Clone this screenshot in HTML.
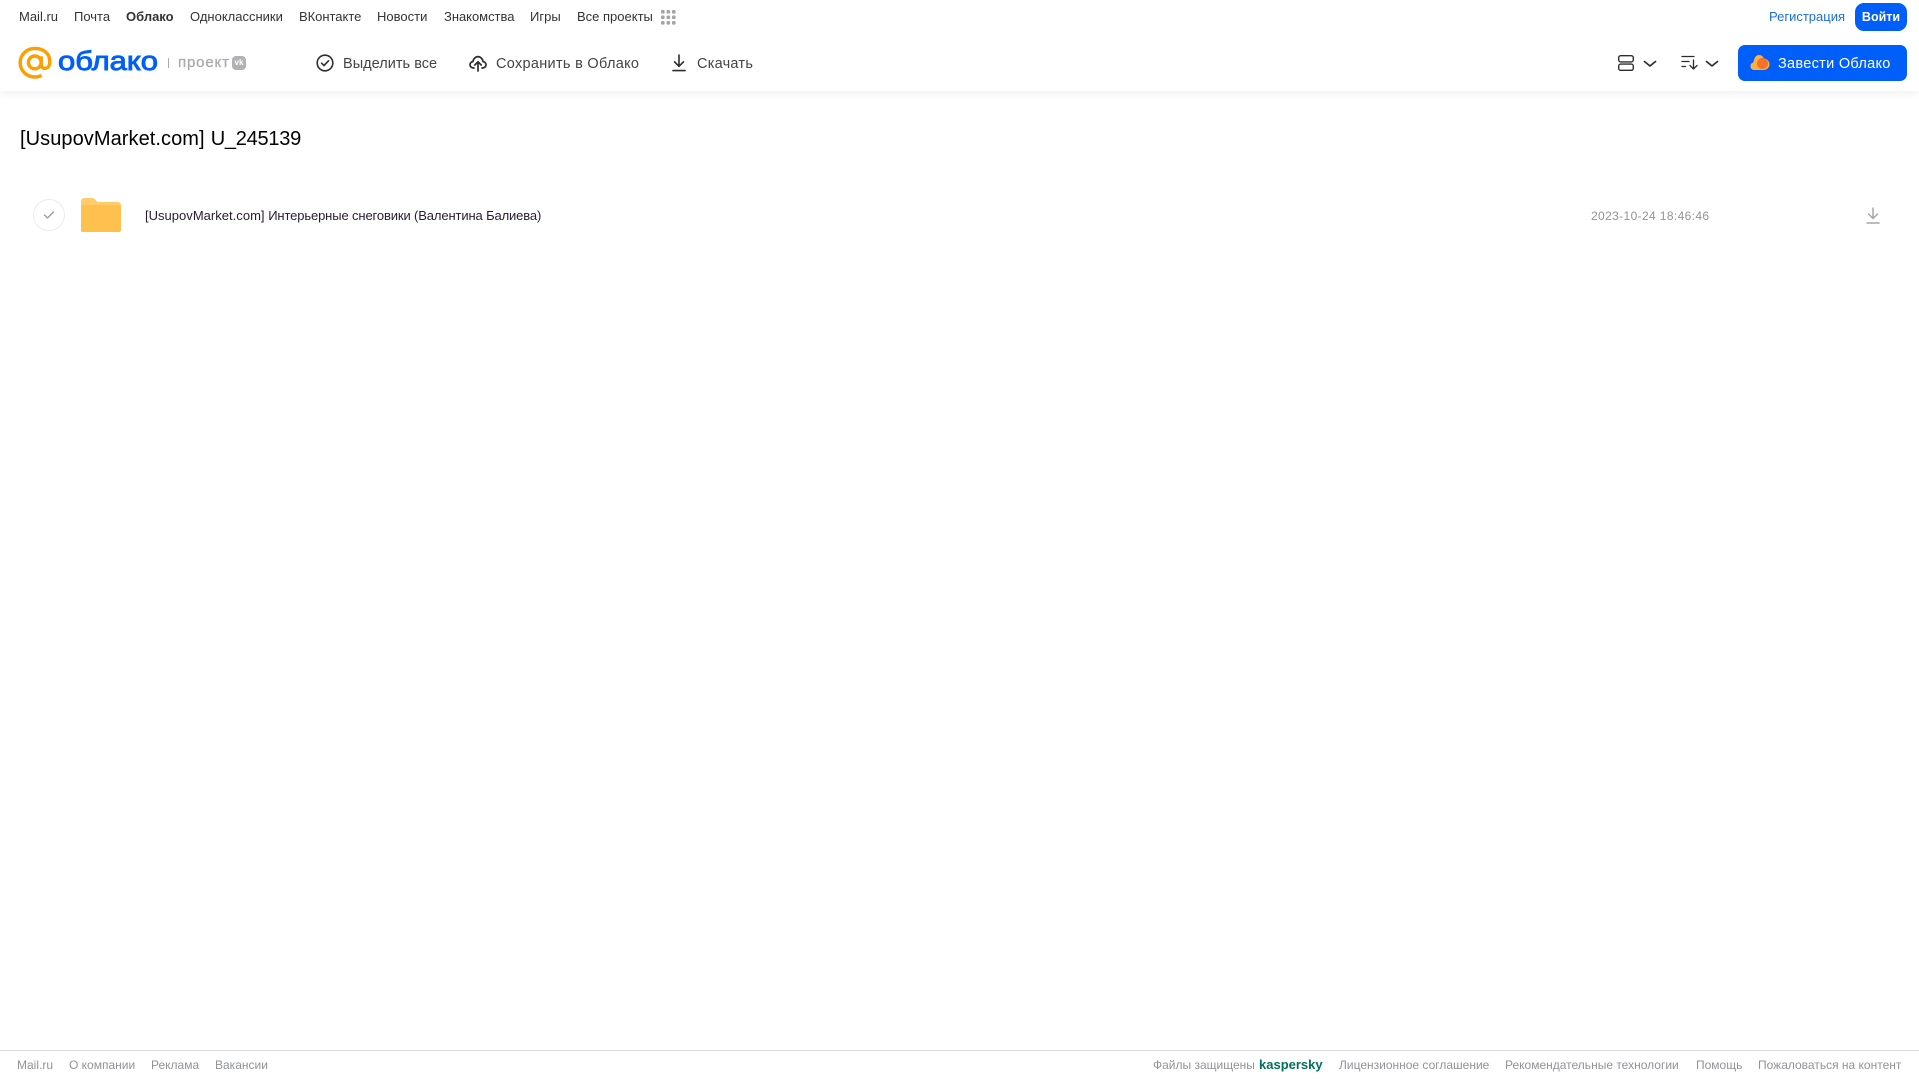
<!DOCTYPE html>
<html lang="ru"><head><meta charset="utf-8"><title>Облако</title>
<style>
html,body{margin:0;padding:0;background:#fff}
body{width:1919px;height:1079px;position:relative;overflow:hidden;font-family:"Liberation Sans",Arial,sans-serif}
.t{position:absolute;white-space:nowrap;line-height:20px}
.n{font-size:13px;color:#333;top:7px}
.h{font-size:14.5px;color:#444;top:54px;letter-spacing:.25px}
.f{font-size:12px;color:#919399;top:1055px}
svg{position:absolute;display:block}
</style></head><body>
<div style="position:absolute;left:0;top:0;width:1919px;height:91px;background:#fff;box-shadow:0 2px 8px rgba(0,0,0,.07)"></div>

<div class="t n" style="left:19px">Mail.ru</div>
<div class="t n" style="left:74px">Почта</div>
<div class="t n" style="left:126px;font-weight:bold">Облако</div>
<div class="t n" style="left:190px">Одноклассники</div>
<div class="t n" style="left:299px;letter-spacing:-.03px">ВКонтакте</div>
<div class="t n" style="left:377px">Новости</div>
<div class="t n" style="left:444px;letter-spacing:-.03px">Знакомства</div>
<div class="t n" style="left:530px">Игры</div>
<div class="t n" style="left:577px">Все проекты</div>
<svg style="left:661px;top:10px" width="15" height="15" fill="#a5a6a8"><rect x="0" y="0" width="3.6" height="3.6" rx="1"/><rect x="5.5" y="0" width="3.6" height="3.6" rx="1"/><rect x="11" y="0" width="3.6" height="3.6" rx="1"/><rect x="0" y="5.5" width="3.6" height="3.6" rx="1"/><rect x="5.5" y="5.5" width="3.6" height="3.6" rx="1"/><rect x="11" y="5.5" width="3.6" height="3.6" rx="1"/><rect x="0" y="11" width="3.6" height="3.6" rx="1"/><rect x="5.5" y="11" width="3.6" height="3.6" rx="1"/><rect x="11" y="11" width="3.6" height="3.6" rx="1"/></svg>

<div class="t" style="left:1769px;top:7px;font-size:13px;color:#1a6fe0">Регистрация</div>
<div class="t" style="left:1855px;top:3px;width:52px;height:28px;line-height:28px;background:#005ff9;border-radius:9px;color:#fff;font-size:12.5px;font-weight:bold;text-align:center">Войти</div>

<svg style="left:18px;top:46px" width="34" height="34" viewBox="0 0 35 34" fill="none" stroke="#ff9e00" stroke-width="3.5"><circle cx="17.3" cy="16.4" r="6.6"/><path d="M23.9 10v8.500c0 5.500 7.600 5.500 8.600-.5C34 8 27 2 17.300 2 9 2 2.200 8.600 2.200 16.600 2.200 25 9 31.400 17.300 31.400c3 0 5-.6 7-1.700"/></svg>
<svg style="left:56px;top:42px;overflow:visible" width="105" height="40"><text x="2" y="28" font-family="Liberation Sans" font-size="27" fill="#005ff9" stroke="#005ff9" stroke-width=".9" textLength="100" lengthAdjust="spacingAndGlyphs">облако</text></svg>
<div style="position:absolute;left:168px;top:58px;width:1px;height:10px;background:#a9abae"></div>
<svg style="left:177px;top:52px;overflow:visible" width="54" height="20"><text x="1" y="15" font-family="Liberation Sans" font-size="15" fill="#a8abaf" stroke="#a8abaf" stroke-width=".3" textLength="51" lengthAdjust="spacing">проект</text></svg>
<div class="t" style="left:232px;top:56px;width:14px;height:14px;line-height:14px;background:#b0b2b6;border-radius:4px;color:#fff;font-size:8px;font-weight:bold;text-align:center">vk</div>

<svg style="left:316px;top:54px" width="18" height="18" fill="none" stroke="#2c2d2e" stroke-width="1.6"><circle cx="9" cy="9" r="7.8"/><path d="M5.600 9.200l2.400 2.400 4.500-4.800" stroke-linecap="round" stroke-linejoin="round"/></svg>
<div class="t h" style="left:343px;letter-spacing:.03px">Выделить все</div>
<svg style="left:469px;top:54px" width="18" height="18" fill="none" stroke="#2c2d2e" stroke-width="1.7" stroke-linecap="round" stroke-linejoin="round"><path d="M5 14H4.400C2.400 14 1 12.500 1 10.800c0-1.700 1.200-3 2.900-3.200C4.300 5 6.400 2.600 9 2.600s4.700 2.400 5.100 5c1.700.2 2.900 1.500 2.900 3.200 0 1.700-1.400 3.200-3.400 3.200H13"/><path d="M9 17V8M5.800 11L9 7.800 12.200 11"/></svg>
<div class="t h" style="left:496px;letter-spacing:.3px">Сохранить в Облако</div>
<svg style="left:671px;top:54px" width="16" height="18" fill="none" stroke="#2c2d2e" stroke-width="1.6" stroke-linecap="round" stroke-linejoin="round"><path d="M8 1v11M3.500 7.800L8 12.300l4.500-4.500M2 16.600h12"/></svg>
<div class="t h" style="left:697px">Скачать</div>

<svg style="left:1618px;top:55px" width="16" height="16" fill="none" stroke="#2c2d2e" stroke-width="1.4"><rect x=".7" y=".7" width="14.600" height="6.200" rx="2"/><rect x=".7" y="9.100" width="14.600" height="6.200" rx="2"/></svg>
<svg style="left:1643px;top:60px" width="14" height="8" fill="none" stroke="#2c2d2e" stroke-width="1.7" stroke-linecap="round" stroke-linejoin="round"><path d="M1.500 1.500L7 6l5.500-4.500"/></svg>
<svg style="left:1681px;top:55px" width="17" height="15" fill="none" stroke="#2c2d2e" stroke-width="1.3" stroke-linecap="round" stroke-linejoin="round"><path d="M1 1.500h12M1 6.500h7M1 11.500h3.500M12.500 5v9M9 10.500l3.500 3.500 3.500-3.500"/></svg>
<svg style="left:1705px;top:60px" width="14" height="8" fill="none" stroke="#2c2d2e" stroke-width="1.7" stroke-linecap="round" stroke-linejoin="round"><path d="M1.500 1.500L7 6l5.500-4.500"/></svg>

<div style="position:absolute;left:1738px;top:45px;width:169px;height:36px;background:#005ff9;border-radius:7px"></div>
<svg style="left:1750px;top:54px" width="20" height="17"><path d="M4.500 16C2 16 .5 14.300.5 12.200c0-2 1.300-3.500 3-3.800C4 4 6 1 9 1c2.500 0 4 1.500 4.800 3.500 3 0 5.700 2.700 5.700 5.800 0 3.300-2.700 5.700-5.700 5.700z" fill="#ffb03a"/><circle cx="12.500" cy="9.500" r="5.500" fill="#f4722b"/></svg>
<div class="t" style="left:1778px;top:54px;font-size:14.5px;color:#fff;letter-spacing:.3px">Завести Облако</div>

<div class="t" style="left:20px;top:126px;line-height:26px;font-size:20px;color:#000;letter-spacing:.07px;word-spacing:.4px">[UsupovMarket.com] <span style="letter-spacing:-.25px">U_245139</span></div>

<div style="position:absolute;left:33px;top:199px;width:30px;height:30px;border:1px solid #ebecee;border-radius:50%"></div>
<svg style="left:43px;top:210px" width="12" height="10" fill="none" stroke="#9a9b9e" stroke-width="1.4" stroke-linecap="round" stroke-linejoin="round"><path d="M1.500 5l3 3 6-6"/></svg>
<svg style="left:81px;top:198px" width="40" height="34" viewBox="0 0 41 34" preserveAspectRatio="none"><path d="M0 3.500C0 1.500 1.500 0 3.500 0h7.500c2 0 3 .7 4.200 2.300.8 1.200 1.800 1.700 3.300 1.700H38c1.700 0 3 1.300 3 3V32c0 1.200-.9 2-2 2H2c-1.100 0-2-.8-2-2z" fill="#ffcb6b"/><path d="M0 9c0-1.100.9-2 2-2h37c1.100 0 2 .9 2 2v23c0 1.100-.9 2-2 2H2c-1.100 0-2-.9-2-2z" fill="#ffc14d"/></svg>
<div class="t" style="left:145px;top:206px;font-size:13px;color:#2a1a33"><span style="letter-spacing:.02px">[UsupovMarket.com] </span><span style="letter-spacing:-.13px">Интерьерные снеговики (Валентина Балиева)</span></div>
<div class="t" style="left:1591px;top:206px;font-size:12px;color:#919399;letter-spacing:.37px">2023-10-24 18:46:46</div>
<svg style="left:1866px;top:207px" width="14" height="18" fill="none" stroke="#a5a6a8" stroke-width="1.5" stroke-linecap="round" stroke-linejoin="round"><path d="M7 1v10M2.500 7L7 11.500 11.500 7M1 16h12"/></svg>

<div style="position:absolute;left:0;top:1050px;width:1919px;height:1px;background:#dcdcde"></div>
<div class="t f" style="left:17px">Mail.ru</div>
<div class="t f" style="left:69px">О компании</div>
<div class="t f" style="left:151px">Реклама</div>
<div class="t f" style="left:215px">Вакансии</div>
<div class="t f" style="left:1153px">Файлы защищены</div>
<div class="t f" style="left:1259px;color:#00705a;font-weight:bold;font-size:13px">kaspersky</div>
<div class="t f" style="left:1339px">Лицензионное соглашение</div>
<div class="t f" style="left:1505px">Рекомендательные технологии</div>
<div class="t f" style="left:1696px">Помощь</div>
<div class="t f" style="left:1758px">Пожаловаться на контент</div>
</body></html>
